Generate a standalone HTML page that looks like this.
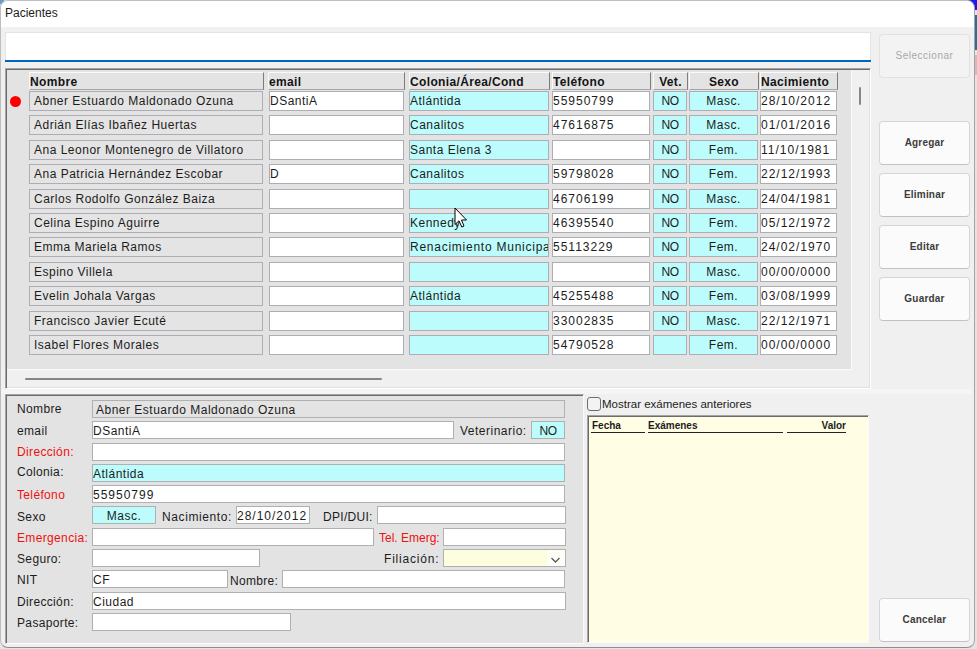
<!DOCTYPE html>
<html><head><meta charset="utf-8"><title>Pacientes</title>
<style>
*{box-sizing:border-box;margin:0;padding:0}
html,body{width:977px;height:649px;overflow:hidden;background:#e4e4e4;font-family:"Liberation Sans",sans-serif;color:#1c1c1c}
.a{position:absolute}
#win{position:absolute;left:0;top:0;width:975px;height:648px;background:#f0f0f0;border:1px solid #bdbdbd;border-bottom-color:#8e8e8e;border-right-color:#a4a4a4;border-radius:8px;overflow:hidden}
#title{position:absolute;left:0;top:0;width:973px;height:26px;background:#fff}
.t12{font-size:12px;letter-spacing:.5px;white-space:nowrap;line-height:18px}
.hd{position:absolute;top:72px;height:18px;background:#e3e3e3;border-top:1px solid #fafafa;border-left:1px solid #fafafa;border-right:1px solid #7c7c7c;border-bottom:1px solid #a6a6a6;font-weight:bold;font-size:12px;line-height:17px;padding-top:1px;letter-spacing:.35px;white-space:nowrap;overflow:hidden;color:#141414}
.cell{position:absolute;height:20px;border:1px solid #adadb3;font-size:12px;letter-spacing:.5px;line-height:18px;white-space:nowrap;overflow:hidden;padding-left:0}
.n{background:#e4e4e4;padding-left:4px}
.w{background:#fff}
.c{background:#bdfcfc}
.cc{background:#bdfcfc;text-align:center}
.fld{position:absolute;height:18px;border:1px solid #b0b0b0;background:#fff;font-size:12px;letter-spacing:.5px;line-height:18px;white-space:nowrap;overflow:hidden;padding-left:0}
.lbl{position:absolute;font-size:12px;letter-spacing:.35px;line-height:16px;white-space:nowrap}
.red{color:#f01010}
.btn{position:absolute;left:879px;width:91px;height:44px;background:#fbfbfb;border:1px solid #d6d6d6;border-bottom-color:#c2c2c2;border-radius:4px;font-size:10px;text-align:center;line-height:42px;color:#3c3c3c;letter-spacing:.2px;font-weight:bold}
</style></head><body>
<div class="a" style="left:955px;top:0;width:22px;height:9px;background:#1a1ae6"></div>
<div class="a" style="left:0;top:0;width:4px;height:4px;background:#6f98cf"></div>
<div id="win">
<div id="title"></div>
</div>

<div class="a t12" style="left:5px;top:4px;letter-spacing:0">Pacientes</div>
<div class="a" style="left:5px;top:32px;width:866px;height:30px;background:#fff;border:1px solid #e3e3e3;border-bottom:none"></div>
<div class="a" style="left:5px;top:60px;width:866px;height:2px;background:#0067c0"></div>
<div class="a" style="left:5px;top:68px;width:866px;height:321px;background:#f0f0f0;border-top:1px solid #a4a4a4;border-left:1px solid #a4a4a4;border-right:1px solid #fff;border-bottom:1px solid #fff;box-shadow:inset 1px 1px 0 #6c6c6c,inset -1px -1px 0 #e2e2e2"></div>
<div class="a" style="left:7px;top:70px;width:844px;height:299px;background:#e3e3e3"></div>
<div class="a" style="left:851px;top:70px;width:1px;height:299px;background:#fafafa"></div>
<div class="a" style="left:7px;top:369px;width:845px;height:1px;background:#fafafa"></div>
<div class="a" style="left:859px;top:87px;width:2px;height:18px;background:#868686;border-radius:1px"></div>
<div class="a" style="left:25px;top:378px;width:357px;height:2px;background:#868686;border-radius:1px"></div>
<div class="hd" style="left:29px;width:235px;padding-left:0;">Nombre</div>
<div class="hd" style="left:268px;width:137px;padding-left:0;">email</div>
<div class="hd" style="left:409px;width:141px;padding-left:0;">Colonia/Área/Cond</div>
<div class="hd" style="left:552px;width:99px;padding-left:0;">Teléfono</div>
<div class="hd" style="left:653px;width:35px;text-align:center;">Vet.</div>
<div class="hd" style="left:689px;width:70px;text-align:center;">Sexo</div>
<div class="hd" style="left:760px;width:78px;padding-left:0;">Nacimiento</div>
<div class="a" style="left:10px;top:96px;width:11px;height:11px;border-radius:50%;background:#f00"></div>
<div class="cell n" style="left:29px;top:91px;width:234px;">Abner Estuardo Maldonado Ozuna</div>
<div class="cell w" style="left:269px;top:91px;width:135px;">DSantiA</div>
<div class="cell c" style="left:409px;top:91px;width:140px;">Atlántida</div>
<div class="cell w" style="left:552px;top:91px;width:98px;letter-spacing:1px;">55950799</div>
<div class="cell cc" style="left:653px;top:91px;width:34px;letter-spacing:-.6px;">NO</div>
<div class="cell cc" style="left:689px;top:91px;width:69px;">Masc.</div>
<div class="cell w" style="left:760px;top:91px;width:77px;letter-spacing:1px;">28/10/2012</div>
<div class="cell n" style="left:29px;top:115px;width:234px;">Adrián Elías Ibañez Huertas</div>
<div class="cell w" style="left:269px;top:115px;width:135px;"></div>
<div class="cell c" style="left:409px;top:115px;width:140px;">Canalitos</div>
<div class="cell w" style="left:552px;top:115px;width:98px;letter-spacing:1px;">47616875</div>
<div class="cell cc" style="left:653px;top:115px;width:34px;letter-spacing:-.6px;">NO</div>
<div class="cell cc" style="left:689px;top:115px;width:69px;">Masc.</div>
<div class="cell w" style="left:760px;top:115px;width:77px;letter-spacing:1px;">01/01/2016</div>
<div class="cell n" style="left:29px;top:140px;width:234px;">Ana Leonor Montenegro de Villatoro</div>
<div class="cell w" style="left:269px;top:140px;width:135px;"></div>
<div class="cell c" style="left:409px;top:140px;width:140px;">Santa Elena 3</div>
<div class="cell w" style="left:552px;top:140px;width:98px;"></div>
<div class="cell cc" style="left:653px;top:140px;width:34px;letter-spacing:-.6px;">NO</div>
<div class="cell cc" style="left:689px;top:140px;width:69px;">Fem.</div>
<div class="cell w" style="left:760px;top:140px;width:77px;letter-spacing:1px;">11/10/1981</div>
<div class="cell n" style="left:29px;top:164px;width:234px;">Ana Patricia Hernández Escobar</div>
<div class="cell w" style="left:269px;top:164px;width:135px;">D</div>
<div class="cell c" style="left:409px;top:164px;width:140px;">Canalitos</div>
<div class="cell w" style="left:552px;top:164px;width:98px;letter-spacing:1px;">59798028</div>
<div class="cell cc" style="left:653px;top:164px;width:34px;letter-spacing:-.6px;">NO</div>
<div class="cell cc" style="left:689px;top:164px;width:69px;">Fem.</div>
<div class="cell w" style="left:760px;top:164px;width:77px;letter-spacing:1px;">22/12/1993</div>
<div class="cell n" style="left:29px;top:189px;width:234px;">Carlos Rodolfo González Baiza</div>
<div class="cell w" style="left:269px;top:189px;width:135px;"></div>
<div class="cell c" style="left:409px;top:189px;width:140px;"></div>
<div class="cell w" style="left:552px;top:189px;width:98px;letter-spacing:1px;">46706199</div>
<div class="cell cc" style="left:653px;top:189px;width:34px;letter-spacing:-.6px;">NO</div>
<div class="cell cc" style="left:689px;top:189px;width:69px;">Masc.</div>
<div class="cell w" style="left:760px;top:189px;width:77px;letter-spacing:1px;">24/04/1981</div>
<div class="cell n" style="left:29px;top:213px;width:234px;">Celina Espino Aguirre</div>
<div class="cell w" style="left:269px;top:213px;width:135px;"></div>
<div class="cell c" style="left:409px;top:213px;width:140px;">Kennedy</div>
<div class="cell w" style="left:552px;top:213px;width:98px;letter-spacing:1px;">46395540</div>
<div class="cell cc" style="left:653px;top:213px;width:34px;letter-spacing:-.6px;">NO</div>
<div class="cell cc" style="left:689px;top:213px;width:69px;">Fem.</div>
<div class="cell w" style="left:760px;top:213px;width:77px;letter-spacing:1px;">05/12/1972</div>
<div class="cell n" style="left:29px;top:237px;width:234px;">Emma Mariela Ramos</div>
<div class="cell w" style="left:269px;top:237px;width:135px;"></div>
<div class="cell c" style="left:409px;top:237px;width:140px;letter-spacing:.75px;">Renacimiento Municipa</div>
<div class="cell w" style="left:552px;top:237px;width:98px;letter-spacing:1px;">55113229</div>
<div class="cell cc" style="left:653px;top:237px;width:34px;letter-spacing:-.6px;">NO</div>
<div class="cell cc" style="left:689px;top:237px;width:69px;">Fem.</div>
<div class="cell w" style="left:760px;top:237px;width:77px;letter-spacing:1px;">24/02/1970</div>
<div class="cell n" style="left:29px;top:262px;width:234px;">Espino Villela</div>
<div class="cell w" style="left:269px;top:262px;width:135px;"></div>
<div class="cell c" style="left:409px;top:262px;width:140px;"></div>
<div class="cell w" style="left:552px;top:262px;width:98px;"></div>
<div class="cell cc" style="left:653px;top:262px;width:34px;letter-spacing:-.6px;">NO</div>
<div class="cell cc" style="left:689px;top:262px;width:69px;">Masc.</div>
<div class="cell w" style="left:760px;top:262px;width:77px;letter-spacing:1px;">00/00/0000</div>
<div class="cell n" style="left:29px;top:286px;width:234px;">Evelin Johala Vargas</div>
<div class="cell w" style="left:269px;top:286px;width:135px;"></div>
<div class="cell c" style="left:409px;top:286px;width:140px;">Atlántida</div>
<div class="cell w" style="left:552px;top:286px;width:98px;letter-spacing:1px;">45255488</div>
<div class="cell cc" style="left:653px;top:286px;width:34px;letter-spacing:-.6px;">NO</div>
<div class="cell cc" style="left:689px;top:286px;width:69px;">Fem.</div>
<div class="cell w" style="left:760px;top:286px;width:77px;letter-spacing:1px;">03/08/1999</div>
<div class="cell n" style="left:29px;top:311px;width:234px;">Francisco Javier Ecuté</div>
<div class="cell w" style="left:269px;top:311px;width:135px;"></div>
<div class="cell c" style="left:409px;top:311px;width:140px;"></div>
<div class="cell w" style="left:552px;top:311px;width:98px;letter-spacing:1px;">33002835</div>
<div class="cell cc" style="left:653px;top:311px;width:34px;letter-spacing:-.6px;">NO</div>
<div class="cell cc" style="left:689px;top:311px;width:69px;">Masc.</div>
<div class="cell w" style="left:760px;top:311px;width:77px;letter-spacing:1px;">22/12/1971</div>
<div class="cell n" style="left:29px;top:335px;width:234px;">Isabel Flores Morales</div>
<div class="cell w" style="left:269px;top:335px;width:135px;"></div>
<div class="cell c" style="left:409px;top:335px;width:140px;"></div>
<div class="cell w" style="left:552px;top:335px;width:98px;letter-spacing:1px;">54790528</div>
<div class="cell cc" style="left:653px;top:335px;width:34px;"></div>
<div class="cell cc" style="left:689px;top:335px;width:69px;">Fem.</div>
<div class="cell w" style="left:760px;top:335px;width:77px;letter-spacing:1px;">00/00/0000</div>
<div class="btn" style="top:34px;height:44px;background:#f3f3f3;border-color:#e2e2e2;color:#a8a8a8;letter-spacing:.5px;font-weight:normal">Seleccionar</div>
<div class="btn" style="top:121px">Agregar</div>
<div class="btn" style="top:173px">Eliminar</div>
<div class="btn" style="top:225px">Editar</div>
<div class="btn" style="top:277px">Guardar</div>
<div class="btn" style="top:598px">Cancelar</div>
<div class="a" style="left:2px;top:389px;width:970px;height:5px;background:#f5f5f5"></div>
<div class="a" style="left:5px;top:394px;width:579px;height:250px;background:#e3e3e3;border-top:1px solid #a4a4a4;border-left:1px solid #a4a4a4;border-right:1px solid #fafafa;border-bottom:1px solid #fafafa;box-shadow:inset 1px 1px 0 #6c6c6c"></div>
<div class="lbl" style="left:17px;top:401px">Nombre</div>
<div class="lbl" style="left:17px;top:423px">email</div>
<div class="lbl red" style="left:17px;top:444px">Dirección:</div>
<div class="lbl" style="left:17px;top:464px">Colonia:</div>
<div class="lbl red" style="left:17px;top:487px">Teléfono</div>
<div class="lbl" style="left:17px;top:509px">Sexo</div>
<div class="lbl red" style="left:17px;top:530px">Emergencia:</div>
<div class="lbl" style="left:17px;top:551px">Seguro:</div>
<div class="lbl" style="left:17px;top:572px">NIT</div>
<div class="lbl" style="left:17px;top:594px">Dirección:</div>
<div class="lbl" style="left:17px;top:615px">Pasaporte:</div>
<div class="fld" style="left:92px;top:400px;width:473px;background:#e3e3e3;padding-left:3px;">Abner Estuardo Maldonado Ozuna</div>
<div class="fld" style="left:92px;top:421px;width:362px;background:#fff;">DSantiA</div>
<div class="fld" style="left:531px;top:421px;width:34px;background:#bdfcfc;text-align:center;letter-spacing:-.6px;">NO</div>
<div class="fld" style="left:92px;top:443px;width:473px;background:#fff;"></div>
<div class="fld" style="left:92px;top:464px;width:473px;background:#bdfcfc;">Atlántida</div>
<div class="fld" style="left:92px;top:485px;width:473px;background:#fff;letter-spacing:1px;">55950799</div>
<div class="fld" style="left:92px;top:506px;width:64px;background:#bdfcfc;text-align:center;">Masc.</div>
<div class="fld" style="left:236px;top:506px;width:74px;background:#fff;letter-spacing:1px;">28/10/2012</div>
<div class="fld" style="left:377px;top:506px;width:189px;background:#fff;"></div>
<div class="fld" style="left:92px;top:528px;width:282px;background:#fff;"></div>
<div class="fld" style="left:443px;top:528px;width:123px;background:#fff;"></div>
<div class="fld" style="left:92px;top:549px;width:168px;background:#fff;"></div>
<div class="fld" style="left:443px;top:549px;width:123px;background:#fdfde0;"></div>
<div class="fld" style="left:92px;top:570px;width:136px;background:#fff;">CF</div>
<div class="fld" style="left:282px;top:570px;width:283px;background:#fff;"></div>
<div class="fld" style="left:92px;top:592px;width:474px;background:#fff;">Ciudad</div>
<div class="fld" style="left:92px;top:613px;width:199px;background:#fff;"></div>
<div class="lbl" style="left:460px;top:423px;letter-spacing:0.5px">Veterinario:</div>
<div class="lbl" style="left:162px;top:509px;letter-spacing:0.6px">Nacimiento:</div>
<div class="lbl" style="left:323px;top:509px;letter-spacing:0.3px">DPI/DUI:</div>
<div class="lbl red" style="left:379px;top:530px;letter-spacing:0px">Tel. Emerg:</div>
<div class="lbl" style="left:384px;top:551px;letter-spacing:0.8px">Filiación:</div>
<div class="lbl" style="left:230px;top:573px;letter-spacing:0.3px">Nombre:</div>
<div class="a" style="left:587px;top:397px;width:14px;height:14px;border:1px solid #6e6e6e;border-radius:3px;background:#f3f3f3"></div>
<div class="lbl" style="left:602px;top:396px;font-size:11.5px;letter-spacing:0">Mostrar exámenes anteriores</div>
<div class="a" style="left:587px;top:415px;width:282px;height:228px;background:#fffde3;border-top:1px solid #a4a4a4;border-left:1px solid #a4a4a4;border-right:1px solid #fafafa;border-bottom:1px solid #fafafa;box-shadow:inset 1px 1px 0 #6c6c6c"></div>
<div class="a" style="left:592px;top:420px;font-size:10px;font-weight:bold;line-height:12px">Fecha</div>
<div class="a" style="left:648px;top:420px;font-size:10px;font-weight:bold;line-height:12px">Exámenes</div>
<div class="a" style="left:760px;top:420px;width:86px;text-align:right;font-size:10px;font-weight:bold;line-height:12px">Valor</div>
<div class="a" style="left:591px;top:432px;width:54px;height:1px;background:#222"></div>
<div class="a" style="left:648px;top:432px;width:135px;height:1px;background:#222"></div>
<div class="a" style="left:787px;top:432px;width:59px;height:1px;background:#222"></div>
<div class="a" style="left:547px;top:550px;width:18px;height:16px;background:#fefef6"></div>
<svg class="a" style="left:549px;top:555px" width="13" height="9" viewBox="0 0 13 9"><path d="M2.5 3 L6.5 7 L10.5 3" fill="none" stroke="#5a5a5a" stroke-width="1.25"/></svg>
<svg class="a" style="left:454px;top:207px" width="14" height="22" viewBox="0 0 14 22"><path d="M1 1 L1 17.5 L5 13.8 L7.8 20 L10 19 L7.5 13 L12.5 13 Z" fill="#fff" stroke="#000" stroke-width="1" stroke-linejoin="round"/></svg>
<div class="a" style="left:975px;top:0;width:2px;height:10px;background:#1a1ae6"></div>
<div class="a" style="left:975px;top:15px;width:2px;height:35px;background:#2f6c9c"></div>
<div class="a" style="left:975px;top:55px;width:2px;height:20px;background:#d8b8b8"></div>
</body></html>
